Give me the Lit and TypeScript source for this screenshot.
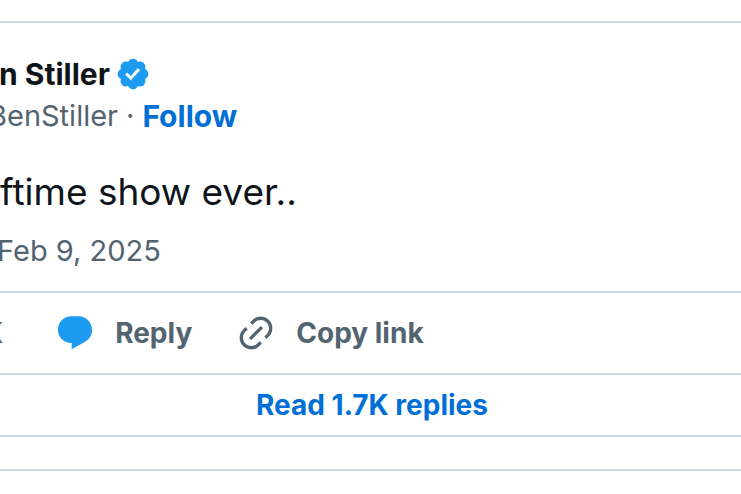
import { LitElement, html, css } from "lit";
import { customElement } from "lit/decorators.js";

@customElement("app-root")
export class AppRoot extends LitElement {
  static styles = css`
    :host {
      display: block;
      overflow: hidden;
      background: #fff;
      color: #0f1419;
      font-family: Inter, "Liberation Sans", sans-serif;
      font-size: 28px;
      line-height: 36px;
      white-space: nowrap;
    }
    .card {
      margin-top: 21px;
      border-top: 2px solid #cfd9de;
      border-bottom: 2px solid #cfd9de;
      padding: 30px 0 32px;
    }
    .author,
    .handle {
      display: flex;
      align-items: center;
      height: 42px;
    }
    .name {
      margin-left: -1px;
      font-size: 30px;
      font-weight: 700;
    }
    .badge {
      width: 36px;
      height: 36px;
      margin-left: 5px;
      fill: #1d9bf0;
    }
    .muted {
      color: #536471;
      font-size: 29px;
    }
    .username {
      margin-left: -12px;
    }
    .dot {
      margin: 0 8px;
    }
    a {
      color: #006fd6;
      font-weight: 700;
      text-decoration: none;
    }
    .follow {
      font-size: 30px;
    }
    .tweet {
      margin: 29px 0 0;
      font-size: 37px;
      line-height: 52px;
    }
    .date {
      display: block;
      margin: 15px 0 22px -3px;
      line-height: 36px;
    }
    .actions {
      display: flex;
      align-items: center;
      height: 80px;
      border-top: 2px solid #cfd9de;
      border-bottom: 2px solid #cfd9de;
    }
    button {
      display: flex;
      align-items: center;
      gap: 20px;
      padding: 0;
      border: 0;
      background: none;
      color: #536471;
      font: inherit;
      font-weight: 700;
    }
    .like {
      margin-left: -17px;
    }
    .reply {
      margin-left: 52px;
    }
    .copy {
      margin-left: 44px;
    }
    .icon {
      width: 40px;
      height: 40px;
      fill: currentColor;
    }
    .blue {
      fill: #1d9bf0;
    }
    .replies {
      display: flex;
      align-items: center;
      justify-content: center;
      height: 60px;
      padding-left: 3px;
      border-bottom: 2px solid #cfd9de;
    }
  `;

  render() {
    return html`
      <article class="card">
        <div class="author">
          <span class="name">n Stiller</span>
          <svg class="badge" viewBox="0 0 24 24" role="img" aria-label="Verified account">
            <path
              d="M22.25 12c0-1.43-.88-2.67-2.19-3.34.46-1.39.2-2.9-.81-3.91s-2.52-1.27-3.91-.81c-.66-1.31-1.91-2.19-3.34-2.19s-2.67.88-3.33 2.19c-1.4-.46-2.91-.2-3.92.81s-1.26 2.52-.8 3.91c-1.31.67-2.2 1.91-2.2 3.34s.89 2.67 2.2 3.34c-.46 1.39-.21 2.9.8 3.91s2.52 1.26 3.91.81c.67 1.31 1.91 2.19 3.34 2.19s2.68-.88 3.34-2.19c1.39.45 2.9.2 3.91-.81s1.27-2.52.81-3.91c1.31-.67 2.19-1.91 2.19-3.34zm-11.71 4.2L6.8 12.46l1.41-1.42 2.26 2.26 4.8-5.23 1.47 1.36-6.2 6.77z"
            />
          </svg>
        </div>
        <div class="handle">
          <span class="muted username">BenStiller</span>
          <span class="muted dot">·</span>
          <a class="follow" href="#follow">Follow</a>
        </div>
        <p class="tweet">ftime show ever..</p>
        <time class="date muted" datetime="2025-02-09">Feb 9, 2025</time>
        <div class="actions">
          <button class="like" type="button">K</button>
          <button class="reply" type="button">
            <svg class="icon blue" viewBox="0 0 24 24" aria-hidden="true">
              <path
                d="M1.751 10c0-4.42 3.584-8 8.005-8h4.366c4.49 0 8.129 3.64 8.129 8.13 0 2.96-1.607 5.68-4.196 7.11l-8.054 4.46v-3.69h-.067c-4.49.1-8.183-3.51-8.183-8.01z"
              />
            </svg>
            Reply
          </button>
          <button class="copy" type="button">
            <svg class="icon" viewBox="0 0 24 24" aria-hidden="true">
              <path
                d="M18.36 5.64c-1.95-1.96-5.11-1.96-7.07 0L9.88 7.05 8.46 5.64l1.42-1.42c2.73-2.73 7.16-2.73 9.9 0 2.73 2.74 2.73 7.17 0 9.9l-1.42 1.42-1.41-1.42 1.41-1.41c1.96-1.96 1.96-5.12 0-7.07zm-2.12 3.53l-7.07 7.07-1.41-1.41 7.07-7.07 1.41 1.41zm-12.02.71l1.42-1.42 1.41 1.42-1.41 1.41c-1.96 1.96-1.96 5.12 0 7.07 1.95 1.96 5.11 1.96 7.07 0l1.41-1.41 1.42 1.41-1.42 1.42c-2.73 2.73-7.16 2.73-9.9 0-2.73-2.74-2.73-7.17 0-9.9z"
              />
            </svg>
            Copy link
          </button>
        </div>
        <div class="replies"><a href="#replies">Read 1.7K replies</a></div>
      </article>
    `;
  }
}
